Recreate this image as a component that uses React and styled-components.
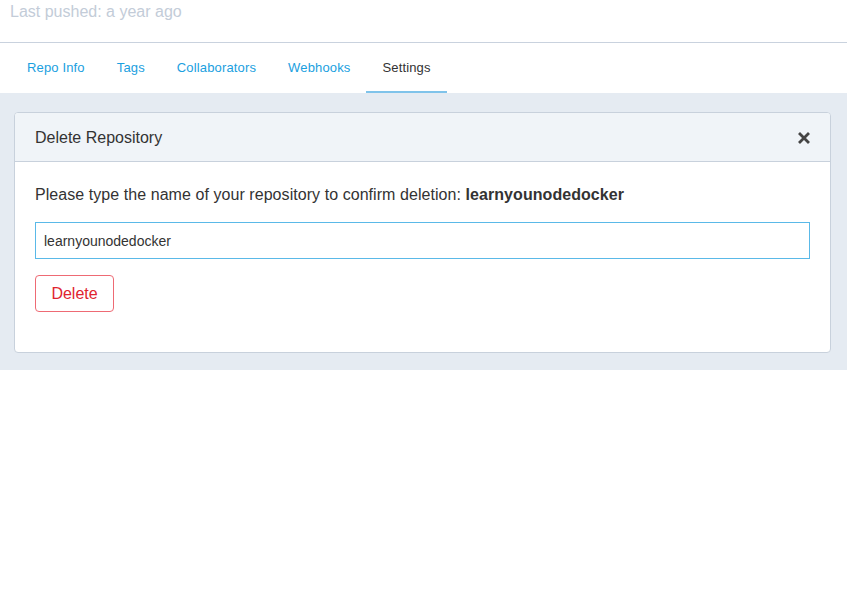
import React from "react";
import styled, { createGlobalStyle } from "styled-components";

const Global = createGlobalStyle`
  html, body { margin: 0; padding: 0; background: #fff; }
  body { font-family: "Liberation Sans", Arial, Helvetica, sans-serif; -webkit-font-smoothing: antialiased; }
  * { box-sizing: border-box; }
`;

const Page = styled.div`
  width: 847px;
`;

const Top = styled.div`
  height: 43px;
  border-bottom: 1px solid #c9d2de;
  padding: 0 10px;
  overflow: hidden;
`;

const Pushed = styled.div`
  font-size: 16px;
  color: #c3ccd8;
  margin-top: -6px;
  line-height: 36px;
`;

const Tabs = styled.nav`
  display: flex;
  height: 50px;
  padding-left: 11px;
`;

const Tab = styled.a`
  display: flex;
  align-items: center;
  padding: 0 16px;
  font-size: 13px;
  letter-spacing: 0.15px;
  color: ${(p) => (p.$active ? "#333" : "#1aa0e0")};
  border-bottom: 2px solid ${(p) => (p.$active ? "#7fc3ea" : "transparent")};
  text-decoration: none;
  cursor: pointer;
`;

const Section = styled.div`
  background: #e5ebf2;
  padding: 19px 16px 17px 14px;
`;

const Card = styled.div`
  background: #fff;
  border: 1px solid #c8d1dc;
  border-radius: 4px;
  overflow: hidden;
`;

const CardHeader = styled.div`
  display: flex;
  align-items: center;
  justify-content: space-between;
  height: 49px;
  padding: 1px 20px 0;
  background: #f0f4f8;
  border-bottom: 1px solid #c8d1dc;
`;

const Title = styled.h3`
  margin: 0;
  font-weight: normal;
  font-size: 16px;
  color: #333;
`;

const Close = styled.button`
  border: none;
  background: none;
  padding: 0;
  display: flex;
  color: #444;
  cursor: pointer;
`;

const CardBody = styled.div`
  padding: 23px 20px 40px 20px;
`;

const Prompt = styled.p`
  margin: 0 0 18px;
  font-size: 16px;
  line-height: 19px;
  letter-spacing: 0.06px;
  color: #333;
  b { font-weight: bold; }
`;

const Input = styled.input`
  display: block;
  width: 775px;
  height: 37px;
  border: 1px solid #5ab9e8;
  border-radius: 0;
  background: #fff;
  padding: 0 8px;
  font-size: 14px;
  font-family: inherit;
  color: #333;
  outline: none;
  appearance: none;
`;

const DeleteButton = styled.button`
  margin-top: 16px;
  width: 79px;
  height: 37px;
  border: 1px solid #ee6a74;
  border-radius: 4px;
  background: #fff;
  color: #e0242f;
  font-size: 16px;
  font-family: inherit;
  cursor: pointer;
`;

const tabs = ["Repo Info", "Tags", "Collaborators", "Webhooks", "Settings"];

export default function App() {
  return (
    <Page>
      <Global />
      <Top>
        <Pushed>Last pushed: a year ago</Pushed>
      </Top>
      <Tabs>
        {tabs.map((t) => (
          <Tab key={t} $active={t === "Settings"}>
            {t}
          </Tab>
        ))}
      </Tabs>
      <Section>
        <Card>
          <CardHeader>
            <Title>Delete Repository</Title>
            <Close aria-label="close">
              <svg width="12" height="12" viewBox="0 0 12 12">
                <path d="M2 2 L10 10 M10 2 L2 10" stroke="#444" strokeWidth="2.8" strokeLinecap="square" />
              </svg>
            </Close>
          </CardHeader>
          <CardBody>
            <Prompt>
              Please type the name of your repository to confirm deletion: <b>learnyounodedocker</b>
            </Prompt>
            <Input defaultValue="learnyounodedocker" />
            <DeleteButton>Delete</DeleteButton>
          </CardBody>
        </Card>
      </Section>
    </Page>
  );
}
